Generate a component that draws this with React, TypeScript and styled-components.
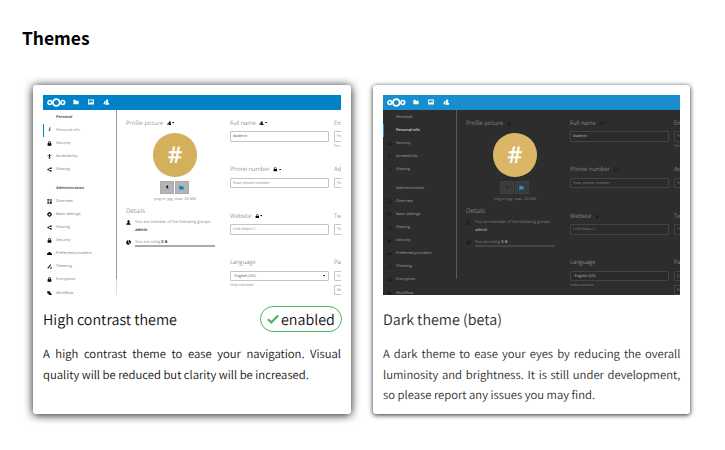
import React from 'react';
import styled, { createGlobalStyle, ThemeProvider } from 'styled-components';

const Global = createGlobalStyle`
  *, *::before, *::after { box-sizing: border-box; }
  body { margin: 0; background: #fff; overflow: hidden; }
`;

const Page = styled.main`
  height: 450px;
  padding: 23px 34px 0 22px;
  font-family: "Noto Sans CJK SC", "Noto Sans", sans-serif;
  color: #111;
`;

const Heading = styled.h2`
  margin: 0 0 32px;
  font-size: 17.4px;
  line-height: 30px;
  font-weight: 700;
  color: #000;
`;

const Cards = styled.div`
  display: grid;
  grid-template-columns: 318px 317.4px;
  gap: 22px;
  padding-left: 11px;
`;

const Card = styled.article<{ $strong?: boolean }>`
  height: 329px;
  padding: 10px;
  border-radius: 3px;
  background: #fff;
  color: ${(p) => (p.$strong ? '#111' : '#2d2d2d')};
  box-shadow: ${(p) => (p.$strong ? '0 1px 10px #111' : '0 1px 5px #222')};
`;

const TitleRow = styled.div`
  display: flex;
  justify-content: space-between;
  align-items: center;
  height: 26px;
  margin-top: 11px;
`;

const Title = styled.h3`
  margin: 0;
  padding-top: 2px;
  font-size: 14.3px;
  line-height: 26px;
  font-weight: 350;
  text-rendering: geometricPrecision;
`;

const Enabled = styled.span`
  display: flex;
  align-items: center;
  gap: 2px;
  width: 82px;
  height: 26px;
  padding-left: 6px;
  border: 1px solid #46ba61;
  border-radius: 13px;
  font-size: 14.3px;
  line-height: 25px;
  font-weight: 350;
  margin-right: -1px;
  text-rendering: geometricPrecision;
`;

const Description = styled.p`
  margin: 12px 0 0;
  font-size: 11.3px;
  line-height: 20.6px;
  font-weight: 350;
  text-align: justify;
  text-rendering: geometricPrecision;
`;

/* ---- miniature settings page ---- */

const light = {
  bar: '#0082c9', bg: '#fff', nav: '#777', navActive: '#888', caption: '#333', head: '#555',
  icon: '#000', iconOpacity: 1, border: '#c4c4c4', scroll: '#999', track: '#ddd', avatar: '#d5b05c',
  button: '#b4b4b4', buttonEdge: '#aaa', text: '#888', strong: '#222', value: '#555',
  quota: '#aaa', marker: '#0082c9', folder: '#0082c9', input: '#fff',
};
const dark: typeof light = {
  bar: '#188ecf', bg: '#2d2d2d', nav: '#a0a0a0', navActive: '#fff', caption: '#888', head: '#b5b5b5',
  icon: '#000', iconOpacity: 0.35, border: '#444', scroll: '#5c5c5c', track: '#2d2d2d', avatar: '#dbb667',
  button: '#3b3b3b', buttonEdge: '#404040', text: '#808080', strong: '#aaa', value: '#bbb',
  quota: '#444', marker: '#1c98dc', folder: '#1c98dc', input: '#2b2b2b',
};
type Palette = typeof light;
declare module 'styled-components' {
  export interface DefaultTheme extends Palette {}
}

const Preview = styled.div`
  height: 200px;
  overflow: hidden;
  display: grid;
  grid-template-rows: 15px 185px;
  background: ${(p) => p.theme.bg};
  font-family: "Open Sans", sans-serif;
  font-size: 4px;
  font-weight: 300;
  white-space: nowrap;
  text-rendering: geometricPrecision;
`;

const TopBar = styled.div`
  display: flex;
  align-items: center;
  padding-left: 3.5px;
  background: ${(p) => p.theme.bar};
`;

const Apps = styled.div`
  display: flex;
  gap: 8.8px;
  margin-left: 7.5px;
`;

const Body = styled.div`
  display: grid;
  grid-template-columns: 74px 104px 104px 104px;
  overflow: hidden;
`;

const Sidebar = styled.nav`
  height: 185px;
  padding-top: 0.7px;
  overflow: hidden;
  background: linear-gradient(
    ${(p) => `${p.theme.scroll} 169px, ${p.theme.track} 169px`}) right / 1px 100% no-repeat;
`;

const NavItem = styled.div<{ $active?: boolean }>`
  display: grid;
  grid-template-columns: 9px 1fr;
  column-gap: 3px;
  align-items: center;
  height: 13.05px;
  border-left: 1px solid ${(p) => (p.$active ? p.theme.marker : 'transparent')};
  color: ${(p) => (p.$active ? p.theme.navActive : p.theme.nav)};
  font-size: 3.9px;
  font-weight: 400;
  svg, i { justify-self: center; margin-left: 2px; }
`;

const NavCaption = styled.div<{ $gap?: boolean }>`
  height: 13px;
  margin-top: ${(p) => (p.$gap ? '6.3px' : '0')};
  padding-left: 13px;
  font-size: 3.9px;
  font-weight: 600;
  line-height: 13px;
  color: ${(p) => p.theme.caption};
`;

const InfoMark = styled.i`
  font: italic 700 6px/6px "Liberation Serif", serif;
  color: ${(p) => p.theme.icon};
  opacity: ${(p) => p.theme.iconOpacity};
`;

const Column = styled.section`
  padding: 8px 0 0 9px;
`;

const FieldHead = styled.h4`
  display: flex;
  align-items: center;
  gap: 3.5px;
  height: 10px;
  margin: 0;
  font-size: 5.9px;
  line-height: 10px;
  font-weight: 300;
  color: ${(p) => p.theme.head};
`;

const Scope = styled.span`
  display: flex;
  align-items: center;
  gap: 1px;
`;

const Fields = styled.div`
  padding: 7.8px 0 0 9px;
`;

const Field = styled.div`
  height: 46.5px;
`;

const Input = styled.div<{ $filled?: boolean; $select?: boolean }>`
  display: flex;
  align-items: center;
  justify-content: space-between;
  width: 98.5px;
  height: 10.5px;
  margin-top: 3.5px;
  padding: 0 ${(p) => (p.$select ? '2.5px 0 3.5px' : '2px')};
  border: 1px solid ${(p) => p.theme.border};
  border-radius: 1px;
  background: ${(p) => p.theme.input};
  color: ${(p) => (p.$filled ? p.theme.value : p.theme.text)};
  font-weight: 400;
  font-size: 3.9px;
`;

const Hint = styled.div`
  height: 8px;
  font-size: 3.6px;
  line-height: 9px;
  font-weight: 400;
  color: ${(p) => p.theme.text};
`;

const Avatar = styled.div`
  display: grid;
  place-items: center;
  width: 43.4px;
  height: 43.4px;
  margin: 5.2px 0 0 27.3px;
  border-radius: 50%;
  background: ${(p) => p.theme.avatar};
  color: #fff;
  font-size: 23px;
  line-height: 43px;
  font-weight: 600;
`;

const Buttons = styled.div`
  display: flex;
  gap: 1.5px;
  margin: 4px 0 0 34px;
`;

const Button = styled.div`
  display: grid;
  place-items: center;
  width: 13.5px;
  height: 13px;
  border: 1px solid ${(p) => p.theme.buttonEdge};
  background: ${(p) => p.theme.button};
`;

const Limits = styled.div`
  width: 98px;
  height: 9px;
  text-align: center;
  font-size: 3.9px;
  line-height: 11px;
  font-weight: 400;
  color: ${(p) => p.theme.text};
`;

const Details = styled(FieldHead)`
  margin-top: 3.6px;
  font-size: 6.3px;
  line-height: 10px;
`;

const DetailRow = styled.div<{ $last?: boolean }>`
  display: grid;
  grid-template-columns: 5px 1fr;
  column-gap: 4px;
  height: 19px;
  line-height: 7.5px;
  margin-top: ${(p) => (p.$last ? '0.5px' : '3px')};
  font-weight: 400;
  color: ${(p) => p.theme.text};
  svg { margin-top: 1.2px; }
  b { font-weight: 600; color: ${(p) => p.theme.strong}; }
`;

const Quota = styled.div`
  width: 80px;
  height: 2px;
  margin-top: -1.2px;
  background: ${(p) => p.theme.quota};
`;

const Svg = styled.svg<{ $size?: number; $tone?: 'white' | 'folder' }>`
  display: block;
  flex: none;
  width: ${(p) => p.$size ?? 5}px;
  height: ${(p) => p.$size ?? 5}px;
  fill: ${(p) => (p.$tone === 'white' ? '#fff' : p.$tone === 'folder' ? p.theme.folder : p.theme.icon)};
  opacity: ${(p) => (p.$tone ? 1 : p.theme.iconOpacity)};
`;

const Logo = styled.svg`
  display: block;
  width: 19px;
  height: 9px;
`;

const Caret = styled.svg`
  display: block;
  width: 2.4px;
  height: 1.6px;
  fill: ${(p) => p.theme.icon};
  opacity: ${(p) => p.theme.iconOpacity};
`;

const paths: Record<string, string> = {
  folder: 'M1 2h5l2 2.5h7V14H1z',
  picture: 'M0 1.500h16v13H0zM2.200 3.700v7.600l3.200-3.500 2.600 2.500 3-3.600 2.800 3.200V3.700z',
  contacts: 'M10 1c2 0 3 1.500 3 3.500s-.6 2.500-1 3.200c0 1 3.500 1.300 3.500 4V14H5.500c0-3 2.500-3.500 2.500-4.500C7 8 7 6.500 7 4.500S8 1 10 1zM4.500 5C6 5 6.200 6 6.200 7.500c0 1.500.5 2 .5 2.500-1 .8-2 1.500-2.200 3H.5c0-2 2.300-2.500 2.300-3.500C2.300 8.500 2.300 5 4.500 5z',
  lock: 'M8 1a4 4 0 0 0-4 4v2H2v8h12V7h-2V5a4 4 0 0 0-4-4zm0 2a2 2 0 0 1 2 2v2H6V5a2 2 0 0 1 2-2z',
  access: 'M8 0a2 2 0 1 1 0 4 2 2 0 0 1 0-4zM1.500 4.500h13v2H10V16H8.600v-4H7.400v4H6V6.500H1.500z',
  share: 'M12.500 1a2.500 2.500 0 1 1-1.800 4.300L6 7.400v1.200l4.700 2.100A2.500 2.500 0 1 1 10 12.500L5.200 10.200A2.600 2.600 0 1 1 5.200 5.800L10 3.500A2.500 2.500 0 0 1 12.500 1z',
  overview: 'M1 1h6v2H1zm0 4h6v2H1zm0 4h6v2H1zm0 4h6v2H1zM9 1h6v6H9zm1.500 1.500v3h3v-3zM9 9h6v6H9z',
  gear: 'M6.500 0h3l.5 2.200 2-1.200 2.200 2.200-1.300 2 2.600.6v3.500l-2.600.5 1.300 2-2.200 2.200-2-1.200-.5 2.700h-3L6 12.800 4 14l-2.200-2.200 1.300-2L.5 9.300V5.800l2.600-.6-1.300-2L4 1l2 1.200zM8 4.800a3.200 3.200 0 1 0 0 6.400 3.200 3.200 0 0 0 0-6.400z',
  cloud: 'M8 3a4 4 0 0 1 4 3.500c2 0 4 1.200 4 3.500s-1.500 3-3 3H3c-1.500 0-3-1-3-3s2-3.300 4-3.500A4 4 0 0 1 8 3z',
  theming: 'M10 1l3 2-5 7-2-1.500zM4 8l3 3c-1 3-4 3-6 2 2-1 1-4 3-5zM11 10h4v5h-4z',
  workflow: 'M1 1h8v4h3v4h3v6H8v-4H5V8H1z',
  user: 'M8 1c2.500 0 3.500 1.500 3.500 3.800S10.500 8 10 9c0 1.500 5 1.500 5 6H1c0-4.500 5-4.500 5-6-.5-1-1.500-2-1.500-4.200S5.500 1 8 1z',
  pie: 'M7 1v7l5.500 5A7 7 0 1 1 7 1zM9 0a7 7 0 0 1 5.500 11L9 7z',
  upload: 'M8 1l5 6h-3v4H6V7H3zM3 13h10v2H3z',
};

function Icon({ name, size, tone }: { name: string; size?: number; tone?: 'white' | 'folder' }) {
  return (
    <Svg viewBox="0 0 16 16" $size={size} $tone={tone}>
      <path fillRule="evenodd" d={paths[name]} />
    </Svg>
  );
}

function ScopeMenu({ icon }: { icon: string }) {
  return (
    <Scope>
      <Icon name={icon} size={4.6} />
      <Caret viewBox="0 0 6 4"><path d="M0 0h6L3 4z" /></Caret>
    </Scope>
  );
}

const personal = [['', 'Personal info'], ['lock', 'Security'], ['access', 'Accessibility'], ['share', 'Sharing']];
const admin = [
  ['overview', 'Overview'], ['gear', 'Basic settings'], ['share', 'Sharing'], ['lock', 'Security'],
  ['cloud', 'Preferred providers'], ['theming', 'Theming'], ['lock', 'Encryption'], ['workflow', 'Workflow'],
];

function SettingsPreview({ palette }: { palette: Palette }) {
  return (
    <ThemeProvider theme={palette}>
      <Preview>
        <TopBar>
          <Logo viewBox="0 0 19 9" fill="none" stroke="#fff">
            <circle cx="2.8" cy="4.5" r="1.9" strokeWidth="1.5" />
            <circle cx="9.3" cy="4.5" r="3.4" strokeWidth="1.8" />
            <circle cx="15.8" cy="4.5" r="1.9" strokeWidth="1.5" />
          </Logo>
          <Apps>
            <Icon name="folder" size={6} tone="white" />
            <Icon name="picture" size={6} tone="white" />
            <Icon name="contacts" size={6.5} tone="white" />
          </Apps>
        </TopBar>
        <Body>
          <Sidebar>
            <NavCaption>Personal</NavCaption>
            {personal.map(([icon, label]) => (
              <NavItem key={label} $active={!icon}>
                {icon ? <Icon name={icon} /> : <InfoMark>i</InfoMark>}
                {label}
              </NavItem>
            ))}
            <NavCaption $gap>Administration</NavCaption>
            {admin.map(([icon, label]) => (
              <NavItem key={label}><Icon name={icon} />{label}</NavItem>
            ))}
          </Sidebar>
          <Column>
            <FieldHead>Profile picture <ScopeMenu icon="contacts" /></FieldHead>
            <Avatar>#</Avatar>
            <Buttons>
              <Button><Icon name="upload" size={4.5} /></Button>
              <Button><Icon name="folder" size={5} tone="folder" /></Button>
            </Buttons>
            <Limits>png or jpg, max. 20 MB</Limits>
            <Details>Details</Details>
            <DetailRow>
              <Icon name="user" />
              <div>You are member of the following groups:<br /><b>admin</b></div>
            </DetailRow>
            <DetailRow $last>
              <Icon name="pie" />
              <div>You are using <b>0 B</b><Quota /></div>
            </DetailRow>
          </Column>
          <Fields>
            <Field>
              <FieldHead>Full name <ScopeMenu icon="contacts" /></FieldHead>
              <Input $filled>#admin</Input>
            </Field>
            <Field>
              <FieldHead>Phone number <ScopeMenu icon="lock" /></FieldHead>
              <Input>Your phone number</Input>
            </Field>
            <Field>
              <FieldHead>Website <ScopeMenu icon="lock" /></FieldHead>
              <Input>Link https://...</Input>
            </Field>
            <Field>
              <FieldHead>Language</FieldHead>
              <Input $filled $select>English (US) <Caret viewBox="0 0 6 4"><path d="M0 0h6L3 4z" /></Caret></Input>
              <Hint>Help translate</Hint>
            </Field>
          </Fields>
          <Fields>
            <Field>
              <FieldHead>Email</FieldHead>
              <Input>Your email address</Input>
              <Hint>For password reset</Hint>
            </Field>
            <Field>
              <FieldHead>Address</FieldHead>
              <Input>Your postal address</Input>
            </Field>
            <Field>
              <FieldHead>Twitter</FieldHead>
              <Input>Twitter handle</Input>
            </Field>
            <Field>
              <FieldHead>Password</FieldHead>
              <Input>Current password</Input>
              <Input>New password</Input>
            </Field>
          </Fields>
        </Body>
      </Preview>
    </ThemeProvider>
  );
}

const Check = styled.svg`
  display: block;
  width: 12px;
  height: 10px;
  fill: none;
  stroke: #46ba61;
  stroke-width: 2.2;
`;

export default function App() {
  return (
    <Page>
      <Global />
      <Heading>Themes</Heading>
      <Cards>
        <Card $strong>
          <SettingsPreview palette={light} />
          <TitleRow>
            <Title>High contrast theme</Title>
            <Enabled>
              <Check viewBox="0 0 12 10"><path d="M.9 5.200L4.300 8.400 11.200 1.500" /></Check>
              enabled
            </Enabled>
          </TitleRow>
          <Description>
            A high contrast theme to ease your navigation. Visual quality will be reduced but clarity will be increased.
          </Description>
        </Card>
        <Card>
          <SettingsPreview palette={dark} />
          <TitleRow>
            <Title>Dark theme (beta)</Title>
          </TitleRow>
          <Description>
            A dark theme to ease your eyes by reducing the overall luminosity and brightness. It is still under
            development, so please report any issues you may find.
          </Description>
        </Card>
      </Cards>
    </Page>
  );
}
